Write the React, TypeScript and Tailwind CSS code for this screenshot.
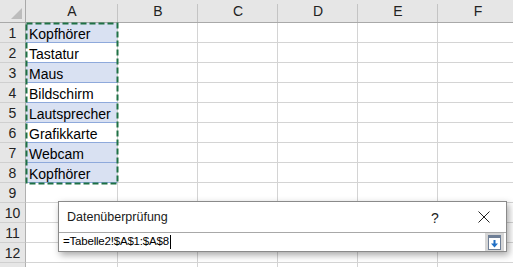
import React from "react";

const cols = [
  { l: "A", w: 92 },
  { l: "B", w: 80 },
  { l: "C", w: 80 },
  { l: "D", w: 80 },
  { l: "E", w: 80 },
  { l: "F", w: 80 },
];

const data = [
  "Kopfhörer",
  "Tastatur",
  "Maus",
  "Bildschirm",
  "Lautsprecher",
  "Grafikkarte",
  "Webcam",
  "Kopfhörer",
];
const blue = [true, false, true, false, true, false, true, true];

const rows = Array.from({ length: 13 }, (_, i) => i + 1);

export default function App() {
  return (
    <div
      className="relative w-[513px] h-[267px] overflow-hidden bg-white text-black"
      style={{ fontFamily: '"Liberation Sans", Arial, sans-serif' }}
    >
      {/* Column header row */}
      <div className="flex h-[23px]">
        <div className="relative w-[26px] shrink-0 h-[23px] bg-[#e6e6e6] border-b border-r border-[#a9a9a9] flex items-end justify-end pr-[3px] pb-[3px]">
          <svg width="11" height="11" viewBox="0 0 11 11">
            <polygon points="11,0 11,11 0,11" fill="#bcbcbc" />
          </svg>
        </div>
        {cols.map((c) => (
          <div
            key={c.l}
            className="relative shrink-0 h-[23px] bg-[#e6e6e6] border-b border-[#a9a9a9] flex items-center justify-center text-[14px] text-[#222]"
            style={{ width: c.w }}
          >
            {c.l}
            <span className="absolute right-0 top-[4px] bottom-0 w-px bg-[#c4c4c4]" />
          </div>
        ))}
      </div>

      {/* Rows */}
      {rows.map((r) => {
        const idx = r - 1;
        const hasData = idx < data.length;
        return (
          <div key={r} className="flex h-[20px]">
            <div className="w-[26px] shrink-0 h-[20px] box-border bg-[#e6e6e6] border-r border-r-[#b0b0b0] border-b border-b-[#cfcfcf] flex justify-center text-[14px] leading-[21px] text-[#222] overflow-hidden">
              {r < 13 ? r : ""}
            </div>
            {cols.map((c, ci) => {
              const isA = ci === 0;
              const filled = isA && hasData && blue[idx];
              const blueLine = isA && hasData;
              return (
                <div
                  key={c.l}
                  className={
                    "shrink-0 h-[20px] box-border border-r border-r-[#d4d4d4] border-b overflow-hidden text-[14px] leading-[22px] pl-[3px] whitespace-nowrap " +
                    (blueLine ? "border-b-[#8ea9db] " : "border-b-[#d4d4d4] ") +
                    (filled ? "bg-[#d9e1f2]" : "bg-white")
                  }
                  style={{ width: c.w }}
                >
                  {isA && hasData ? data[idx] : ""}
                </div>
              );
            })}
          </div>
        );
      })}

      {/* Marching ants selection */}
      <svg
        className="absolute left-[25px] top-[22px]"
        width="94"
        height="163"
        viewBox="0 0 94 163"
      >
        <rect
          x="1.5"
          y="1.5"
          width="91"
          height="160"
          fill="none"
          stroke="#1e7145"
          strokeWidth="2"
          strokeDasharray="6 3"
        />
      </svg>

      {/* Dialog */}
      <div className="absolute left-[58px] top-[201px] w-[449px] h-[51px] bg-white border border-[#8a8a8a] shadow-[2px_3px_7px_rgba(0,0,0,0.35)] flex flex-col">
        <div className="relative h-[30px] flex items-center pl-[8px] text-[12.5px] text-[#1a1a1a]">
          <span>Datenüberprüfung</span>
          <span className="absolute left-[372px] top-[6px] text-[14px] text-[#222]">?</span>
          <svg
            className="absolute left-[419px] top-[9px]"
            width="12"
            height="12"
            viewBox="0 0 12 12"
          >
            <path d="M0.5 0.5 L11.5 11.5 M11.5 0.5 L0.5 11.5" stroke="#222" strokeWidth="1" />
          </svg>
        </div>
        <div className="h-px bg-[#a8a8a8]" />
        <div className="h-[18px] flex items-center">
          <div className="flex-1 flex items-center pl-[4px] text-[11.5px] tracking-[-0.2px] text-black">
            <span>=Tabelle2!$A$1:$A$8</span>
            <span className="ml-[1px] w-px h-[14px] bg-black" />
          </div>
          <div className="w-[19px] h-[18px] mr-[2px] bg-[#d6d6d6] flex items-center justify-center">
            <svg width="13" height="15" viewBox="0 0 13 15">
              <rect x="0.5" y="0.5" width="12" height="14" fill="#ffffff" stroke="#6f7f96" />
              <rect x="1" y="1" width="11" height="2" fill="#6f7f96" />
              <path d="M5.5 5 H7.5 V8.5 H10 L6.5 12.5 L3 8.5 H5.5 Z" fill="#1f6fc5" />
            </svg>
          </div>
        </div>
      </div>
    </div>
  );
}
